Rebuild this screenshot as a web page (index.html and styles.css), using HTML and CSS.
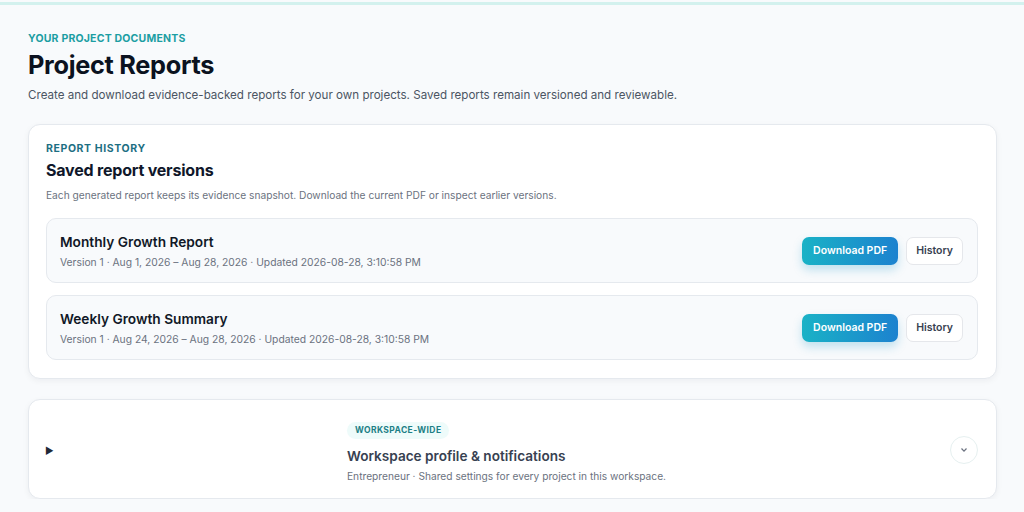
FILE: index.html
```html
<!DOCTYPE html>
<html>
    <head>
        <meta charset="UTF-8">
        <title>Project Reports</title>
        <link rel="stylesheet" href="styles.css">
    </head>
    <body>
        <div class="page">
            <header class="head">
                <p class="eyebrow">Your project documents</p>
                <h1>Project Reports</h1>
                <p class="lead">Create and download evidence-backed reports for your own projects. Saved reports remain versioned and reviewable.</p>
            </header>

            <section class="card history">
                <p class="kicker">Report history</p>
                <h2>Saved report versions</h2>
                <p class="note">Each generated report keeps its evidence snapshot. Download the current PDF or inspect earlier versions.</p>
                <ul class="reports">
                    <li class="report">
                        <div class="info">
                            <h3>Monthly Growth Report</h3>
                            <p>Version 1 · Aug 1, 2026 – Aug 28, 2026 · Updated 2026-08-28, 3:10:58 PM</p>
                        </div>
                        <div class="actions">
                            <button class="btn primary">Download PDF</button>
                            <button class="btn ghost">History</button>
                        </div>
                    </li>
                    <li class="report">
                        <div class="info">
                            <h3>Weekly Growth Summary</h3>
                            <p>Version 1 · Aug 24, 2026 – Aug 28, 2026 · Updated 2026-08-28, 3:10:58 PM</p>
                        </div>
                        <div class="actions">
                            <button class="btn primary">Download PDF</button>
                            <button class="btn ghost">History</button>
                        </div>
                    </li>
                </ul>
            </section>

            <details class="card workspace">
                <summary>
                    <span class="marker">&#9654;</span>
                    <div class="ws-text">
                        <span class="badge">Workspace-wide</span>
                        <h3>Workspace profile &amp; notifications</h3>
                        <p>Entrepreneur · Shared settings for every project in this workspace.</p>
                    </div>
                    <span class="chev">
                        <svg width="8" height="6" viewBox="0 0 8 6"><path d="M1.5 1.5 4 4.2 6.5 1.5" fill="none" stroke="#6b7280" stroke-width="1.2"/></svg>
                    </span>
                </summary>
            </details>
        </div>
    </body>
</html>
```

FILE: styles.css
```css
body{margin:0;font-family:Inter,"Noto Sans",sans-serif;background:#f8fafc;color:#0f172a;}
h1,h2,h3,p{margin:0;}
ul,li{margin:0;padding:0;list-style:none;}
button{margin:0;font-family:inherit;cursor:pointer;}

.page{
    border-top:3px solid #d3f1ee;
    margin-top:2px;
    padding:27px 27px 0 28px;
}
.eyebrow{
    font-size:10.5px;
    font-weight:700;
    letter-spacing:.2px;
    text-transform:uppercase;
    color:#1c9ea3;
    line-height:14px;
}
.head h1{
    margin-top:3px;
    font-size:25.3px;
    font-weight:700;
    letter-spacing:-.3px;
    line-height:32px;
    color:#0b1220;
}
.lead{
    margin-top:5px;
    font-size:11.6px;
    color:#4b5563;
    line-height:18px;
}

.card{
    background:#fff;
    border:1px solid #e5e9ee;
    border-radius:12px;
    box-shadow:0 2px 6px rgba(15,23,42,.05);
}
.history{
    margin-top:20px;
    padding:17px 18px 18px 17px;
}
.kicker{
    font-size:10.5px;
    font-weight:700;
    letter-spacing:.6px;
    text-transform:uppercase;
    color:#1d6f83;
    line-height:14px;
}
.history h2{
    margin-top:3px;
    font-size:16px;
    font-weight:700;
    letter-spacing:-.2px;
    line-height:22px;
}
.note{
    margin-top:7px;
    font-size:10.2px;
    color:#6b7280;
    line-height:15px;
}
.reports{
    display:flex;
    flex-direction:column;
    gap:12px;
    margin-top:15px;
}
.report{
    display:flex;
    align-items:center;
    justify-content:space-between;
    height:63px;
    padding:0 14px 0 13px;
    background:#f8fafc;
    border:1px solid #e5e9ee;
    border-radius:10px;
}
.info h3{
    font-size:13.7px;
    font-weight:600;
    line-height:18px;
    color:#111827;
}
.info p{
    margin-top:4px;
    font-size:10.3px;
    color:#6b7280;
    line-height:14px;
}
.actions{
    display:flex;
    gap:8px;
}
.btn{
    height:28px;
    font-size:10.5px;
    font-weight:600;
    border-radius:7px;
}
.primary{
    padding:0 11px;
    color:#fff;
    border:none;
    background:linear-gradient(90deg,#1ab2c6,#1c82cf);
    box-shadow:0 5px 10px rgba(26,150,200,.25);
}
.ghost{
    padding:0 9px;
    color:#374151;
    background:#fff;
    border:1px solid #e5e7eb;
}

.workspace{
    margin-top:20px;
    height:98px;
}
.workspace summary{
    display:flex;
    align-items:center;
    height:100%;
    padding:0 18px 0 16px;
    list-style:none;
}
.workspace summary::-webkit-details-marker{display:none;}
.marker{
    width:302px;
    font-size:9.5px;
    color:#1f2937;
    padding-top:2px;
}
.ws-text{flex:1;margin-top:1px;}
.badge{
    display:inline-block;
    height:17px;
    padding:0 8px;
    font-size:8.5px;
    font-weight:700;
    letter-spacing:.4px;
    text-transform:uppercase;
    line-height:17px;
    color:#1d7f86;
    background:#eefbfa;
    border-radius:9px;
}
.ws-text h3{
    margin-top:8px;
    font-size:13.6px;
    font-weight:600;
    line-height:18px;
    color:#374151;
}
.ws-text p{
    margin-top:4px;
    font-size:10.2px;
    color:#6b7280;
    line-height:14px;
}
.chev{
    display:flex;
    align-items:center;
    justify-content:center;
    width:26px;
    height:26px;
    margin-top:2px;
    border:1px solid #e6f0f0;
    border-radius:50%;
}
```
